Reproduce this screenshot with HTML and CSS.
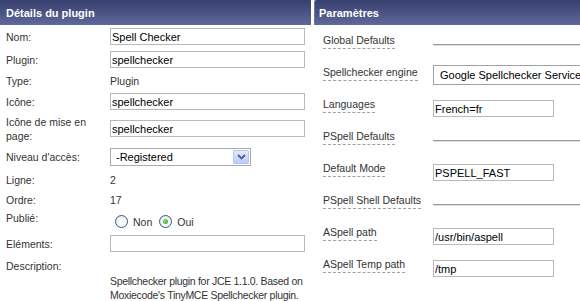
FILE: index.html
```html
<!DOCTYPE html>
<html lang="fr">

<head>
    <meta charset="UTF-8">
    <meta name="viewport" content="width=device-width,initial-scale=1.0">
    <title>Plugin: Spell Checker</title>
    <link rel="stylesheet" href="styles.css">
</head>

<body>
    <div class="page">
        <div class="panel panel-details">
            <div class="panel-head">Détails du plugin</div>
            <div class="details">
                <label for="name">Nom:</label>
                <input type="text" id="name" class="text" value="Spell Checker">

                <label for="element">Plugin:</label>
                <input type="text" id="element" class="text" value="spellchecker">

                <label>Type:</label>
                <span class="value">Plugin</span>

                <label for="icon">Icône:</label>
                <input type="text" id="icon" class="text" value="spellchecker">

                <label for="layout">Icône de mise en page:</label>
                <input type="text" id="layout" class="text" value="spellchecker">

                <label>Niveau d'accès:</label>
                <div class="combo">
                    <span class="combo-text">-Registered</span>
                    <span class="combo-btn">
                        <svg width="9" height="6" viewBox="0 0 9 6">
                            <path d="M1 1 L4.5 4.5 L8 1" fill="none" stroke="#4d6185" stroke-width="1.8"/>
                        </svg>
                    </span>
                </div>

                <label>Ligne:</label>
                <span class="value">2</span>

                <label>Ordre:</label>
                <span class="value">17</span>

                <label>Publié:</label>
                <div class="radios">
                    <span class="radio"></span><span class="radio-label">Non</span>
                    <span class="radio checked"></span><span class="radio-label">Oui</span>
                </div>

                <label for="elements">Eléments:</label>
                <input type="text" id="elements" class="text" value="">

                <label class="label-top">Description:</label>
                <p class="desc">Spellchecker plugin for JCE 1.1.0. Based on Moxiecode's TinyMCE Spellchecker plugin.</p>
            </div>
        </div>

        <div class="panel panel-params">
            <div class="panel-head">Paramètres</div>
            <div class="params">
                <span class="param-label"><span>Global Defaults</span></span>
                <div class="sep"></div>

                <span class="param-label"><span>Spellchecker engine</span></span>
                <div class="combo combo-wide">
                    <span class="combo-text">Google Spellchecker Service</span>
                </div>

                <span class="param-label"><span>Languages</span></span>
                <input type="text" class="text small" value="French=fr">

                <span class="param-label"><span>PSpell Defaults</span></span>
                <div class="sep"></div>

                <span class="param-label"><span>Default Mode</span></span>
                <input type="text" class="text small" value="PSPELL_FAST">

                <span class="param-label"><span>PSpell Shell Defaults</span></span>
                <div class="sep"></div>

                <span class="param-label"><span>ASpell path</span></span>
                <input type="text" class="text small" value="/usr/bin/aspell">

                <span class="param-label"><span>ASpell Temp path</span></span>
                <input type="text" class="text small" value="/tmp">
            </div>
        </div>
    </div>
</body>

</html>
```

FILE: styles.css
```css
* {
    margin: 0;
    padding: 0;
    box-sizing: border-box;
}

body {
    background: #fff;
    color: #333;
    font-family: 'Liberation Sans', Arial, sans-serif;
    font-size: 10.5px;
    line-height: 14px;
    overflow: hidden;
}

.page {
    display: flex;
    gap: 3px;
    width: 580px;
    height: 301px;
}

.panel {
    overflow: hidden;
}

.panel-details {
    width: 311px;
    flex: none;
}

.panel-params {
    flex: 1;
}

.panel-head {
    height: 25px;
    padding: 6px 6px 5px;
    background: linear-gradient(#363f6d, #5e699a);
    color: #fff;
    font-size: 11px;
    font-weight: bold;
    white-space: nowrap;
}

.panel-params .panel-head {
    padding-left: 4px;
    border-left: 1px solid #6c76a4;
    border-top-left-radius: 2px;
}

/* left column */

.details {
    display: grid;
    grid-template-columns: 104px 195px;
    grid-template-rows: 23px 23px 20px 21px 33px 23px 24px 16px 20px 31px auto;
    align-items: center;
    padding-left: 6px;
}

.label-top {
    align-self: start;
}

.text {
    display: block;
    height: 17px;
    width: 100%;
    padding: 0 1px;
    border: 1px solid #b9b9b9;
    font-family: 'Liberation Sans', Arial, sans-serif;
    font-size: 11px;
    color: #000;
    background: #fff;
    outline: none;
}

.combo {
    display: flex;
    align-items: center;
    justify-content: space-between;
    width: 141px;
    height: 18px;
    border: 1px solid #a5acb2;
    padding: 0 1px 0 5px;
    font-size: 11px;
    color: #000;
}

.combo-btn {
    display: flex;
    align-items: center;
    justify-content: center;
    width: 16px;
    height: 14px;
    border: 1px solid #b7c6ea;
    border-radius: 1px;
    background: linear-gradient(#e2eafd, #bccdf7);
}

.radios {
    display: flex;
    align-items: center;
    padding: 7px 0 0 5px;
}

.radio {
    width: 13px;
    height: 13px;
    border: 1px solid #2f5a8a;
    border-radius: 50%;
    background: radial-gradient(circle at 60% 65%, #fff 30%, #dcdcd6 100%);
    position: relative;
}

.radio.checked::after {
    content: "";
    position: absolute;
    left: 3px;
    top: 3px;
    width: 5px;
    height: 5px;
    border-radius: 50%;
    background: radial-gradient(circle at 40% 40%, #7fe07a, #21a11b);
}

.radio-label {
    margin: 0 7px 0 5px;
}

.desc {
    align-self: start;
    padding-top: 15px;
    letter-spacing: -0.3px;
}

/* right column */

.params {
    display: grid;
    grid-template-columns: 119px 1fr;
    grid-auto-rows: 32px;
    align-items: start;
    padding-top: 8px;
}

.param-label {
    padding-left: 9px;
    white-space: nowrap;
}

.param-label span {
    display: inline-block;
    line-height: 14px;
    padding-bottom: 1px;
    border-bottom: 1px dashed #a0a0a0;
}

.sep {
    margin-top: 11px;
    height: 2px;
    border-top: 1px solid #9a9a9a;
    border-bottom: 1px solid #e2e2e2;
}

.text.small {
    width: 121px;
    margin-top: 3px;
}

.combo-wide {
    width: 160px;
    height: 20px;
    border-color: #a0a0a0;
    padding-left: 6px;
}
```
